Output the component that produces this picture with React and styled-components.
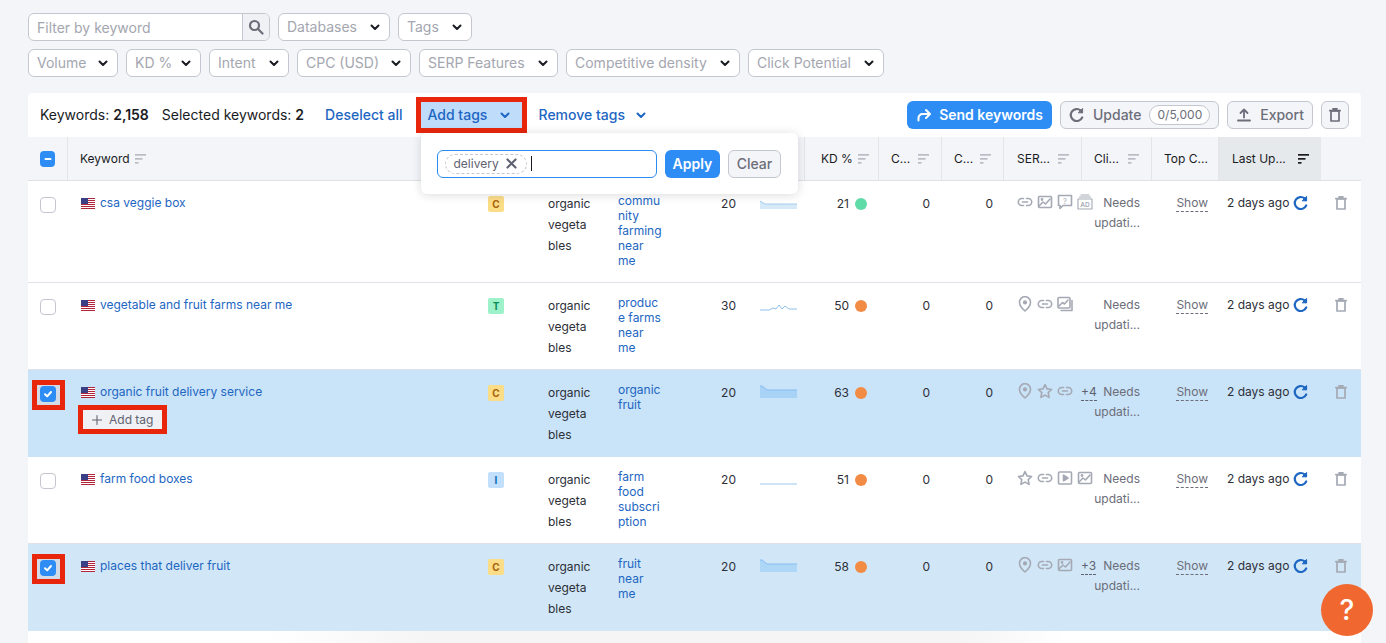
import React from 'react';
import styled, { createGlobalStyle } from 'styled-components';

const GlobalStyle = createGlobalStyle`
  html, body {
    margin: 0;
    padding: 0;
    background: #f4f5f9;
    font-family: Inter, 'Liberation Sans', sans-serif;
    color: #191b23;
  }
  * { box-sizing: border-box; }
`;

const COLUMNS = '40px 410px 60px 70px 72px 65px 60px 74px 63px 62px 78px 70px 67px 102px 40px';

const Page = styled.div`
  height: 643px;
  overflow: hidden;
  padding: 13px 25px 0 28px;
`;

const FilterRow = styled.div`
  display: flex;
  gap: 8px;
  margin-bottom: 8px;
`;

const SearchBox = styled.div`
  display: flex;
  width: 242px;
  height: 28px;
  border: 1px solid #c4c7cf;
  border-radius: 6px;
  background: #fff;
  overflow: hidden;
`;

const SearchInput = styled.div`
  flex: 1;
  padding-left: 8px;
  font-size: 14px;
  line-height: 28px;
  color: #a4a6b0;
`;

const SearchAddon = styled.div`
  width: 27px;
  display: flex;
  align-items: center;
  justify-content: center;
  border-left: 1px solid #c4c7cf;
  background: #f0f1f4;
  color: #6c6e79;
`;

const FilterButton = styled.div`
  width: ${p => p.$width}px;
  height: 28px;
  display: flex;
  align-items: center;
  justify-content: space-between;
  padding: 0 8px;
  background: #fff;
  border: 1px solid #c4c7cf;
  border-radius: 6px;
  font-size: 14px;
  line-height: 26px;
  color: #a4a6b0;
  white-space: nowrap;
`;

const Card = styled.div`
  margin-top: 16px;
  background: #fff;
  border-radius: 4px 4px 0 0;
`;

const Toolbar = styled.div`
  height: 44px;
  display: flex;
  align-items: center;
  padding: 0 12px;
  font-size: 14px;
  line-height: 16px;
  white-space: nowrap;
`;

const Count = styled.span`
  margin-right: 13px;
  b { font-weight: 600; }
`;

const LinkButton = styled.div`
  display: flex;
  align-items: center;
  gap: 10px;
  height: 26px;
  font-weight: 500;
  color: #1d66c2;
  margin-left: ${p => p.$left || 0}px;
`;

const AddTagsWrap = styled.div`
  position: relative;
  margin-left: 13px;
  z-index: 3;
`;

const AddTagsButton = styled.div`
  display: flex;
  align-items: center;
  gap: 12px;
  height: 36px;
  width: 111px;
  padding-left: 7px;
  border: 5px solid #e8260c;
  background: #bfdcfb;
  font-weight: 500;
  color: #1d66c2;
`;

const Popover = styled.div`
  position: absolute;
  left: 5px;
  top: 36px;
  width: 377px;
  height: 61px;
  display: flex;
  align-items: center;
  gap: 8px;
  padding: 0 16px;
  background: #fff;
  border-radius: 6px;
  box-shadow: 0 1px 10px rgba(25, 27, 35, 0.16);
`;

const TagInput = styled.div`
  flex: none;
  width: 220px;
  height: 28px;
  display: flex;
  align-items: center;
  gap: 4px;
  padding-left: 7px;
  border: 1px solid #2b8cef;
  border-radius: 6px;
`;

const TagChip = styled.div`
  display: flex;
  align-items: center;
  gap: 6px;
  height: 20px;
  padding: 0 8px;
  border: 1px dashed #c4c7cf;
  border-radius: 10px;
  font-size: 12px;
  color: #5f6270;
`;

const Caret = styled.div`
  width: 1px;
  height: 15px;
  background: #191b23;
`;

const PrimaryButton = styled.div`
  height: 28px;
  display: flex;
  align-items: center;
  gap: 7px;
  padding: 0 ${p => p.$pad || 8}px;
  border-radius: 6px;
  background: #2e8df5;
  color: #fff;
  font-size: 14px;
  font-weight: 600;
`;

const GhostButton = styled.div`
  height: 28px;
  display: flex;
  align-items: center;
  gap: 8px;
  padding: 0 ${p => p.$pad || 8}px;
  border: 1px solid #c4c7cf;
  border-radius: 6px;
  background: #f4f5f9;
  color: #6c6e79;
  font-size: 14px;
  font-weight: 500;
`;

const ToolbarActions = styled.div`
  margin-left: auto;
  display: flex;
  gap: 8px;
`;

const Quota = styled.span`
  height: 20px;
  padding: 0 7px;
  display: flex;
  align-items: center;
  border: 1px solid #c4c7cf;
  border-radius: 10px;
  background: #fff;
  font-size: 12px;
  font-weight: 400;
`;

const HeaderRow = styled.div`
  display: grid;
  grid-template-columns: ${COLUMNS};
  height: 44px;
  background: #f4f5f9;
  border-bottom: 1px solid #dfe1e6;
`;

const HeaderCell = styled.div`
  display: flex;
  align-items: center;
  justify-content: ${p => (p.$packed ? 'flex-start' : 'space-between')};
  gap: 5px;
  padding: 0 12px 0 ${p => p.$left || 12}px;
  border-right: ${p => (p.$flat ? 'none' : '1px solid #e4e5ea')};
  background: ${p => (p.$active ? '#e6e9ec' : 'transparent')};
  color: #191b23;
  font-size: 12px;
  white-space: nowrap;
`;

const Row = styled.div`
  display: grid;
  grid-template-columns: ${COLUMNS};
  min-height: 87px;
  background: ${p => p.$bg || '#fff'};
  border-bottom: ${p => (p.$bg ? 'none' : '1px solid #e0e1e9')};
`;

const CheckCell = styled.div`
  padding: 15px 0 0 9px;
`;

const CheckWrap = styled.div`
  width: 23px;
  height: 20px;
  padding: 1px 4px 3px 3px;
  background: ${p => (p.$marked ? '#d3dbe6' : 'transparent')};
  outline: ${p => (p.$marked ? '5px solid #e8260c' : 'none')};
`;

const Checkbox = styled.div`
  width: 16px;
  height: 16px;
  display: flex;
  align-items: center;
  justify-content: center;
  border-radius: 4px;
  background: ${p => (p.$on ? '#2e8df5' : '#fff')};
  border: ${p => (p.$on ? 'none' : '1px solid #c4c7cf')};
`;

const KeywordCell = styled.div`
  padding: 13px 0 0 13px;
`;

const KeywordLine = styled.div`
  display: flex;
  align-items: center;
  gap: 5px;
  font-size: 12px;
  line-height: 18px;
  color: #1d66c2;
`;

const AddTagButton = styled.div`
  display: inline-flex;
  align-items: center;
  gap: 6px;
  width: 79px;
  height: 19px;
  margin: 9px 0 0 2px;
  padding-left: 8px;
  background: #f0f1f4;
  outline: 5px solid #e8260c;
  font-size: 12px;
  color: #5f6270;
`;

const IntentCell = styled.div`
  padding: 15px 0 0 10px;
`;

const IntentBadge = styled.div`
  width: 16px;
  height: 16px;
  display: flex;
  align-items: center;
  justify-content: center;
  border-radius: 2px;
  background: ${p => p.$bg};
  color: ${p => p.$fg};
  font-size: 10px;
  font-weight: 700;
`;

const TagCell = styled.div`
  padding: 12px 0 0 10px;
  font-size: 12px;
  line-height: 21px;
  color: #2d2f38;
`;

const TopicCell = styled.div`
  padding: 12px 0 14px 10px;
  font-size: 12px;
  line-height: 15px;
  color: #1d66c2;
`;

const NumberCell = styled.div`
  padding: 12px ${p => p.$right || 11}px 0 0;
  text-align: right;
  font-size: 12px;
  line-height: 21px;
  color: #2d2f38;
`;

const TrendCell = styled.div`
  padding: 15px 0 0 15px;
`;

const KdCell = styled.div`
  display: flex;
  justify-content: flex-end;
  align-items: flex-start;
  gap: 6px;
  padding: 12px 12px 0 0;
  font-size: 12px;
  line-height: 21px;
  color: #2d2f38;
`;

const KdDot = styled.span`
  width: 12px;
  height: 12px;
  margin-top: 5px;
  border-radius: 50%;
  background: ${p => p.$color};
`;

const SerpCell = styled.div`
  display: flex;
  align-items: flex-start;
  gap: 4px;
  padding: 13px 0 0 13px;
  color: #a4a9b4;
  white-space: nowrap;
`;

const MoreLink = styled.span`
  margin-left: 4px;
  font-size: 12px;
  line-height: 17px;
  color: #5f6270;
  border-bottom: 1px dashed #5f6270;
`;

const NeedsCell = styled.div`
  padding: 12px 12px 0 0;
  text-align: right;
  font-size: 12px;
  line-height: 20px;
  color: #6c6e79;
`;

const ShowCell = styled.div`
  padding: 12px 11px 0 0;
  text-align: right;
  font-size: 12px;
  line-height: 20px;
  color: #6c6e79;
`;

const ShowLink = styled.span`
  display: inline-block;
  line-height: 16px;
  border-bottom: 1px dashed #6c6e79;
`;

const DateCell = styled.div`
  display: flex;
  align-items: flex-start;
  gap: 4px;
  padding: 12px 0 0 8px;
  font-size: 12px;
  line-height: 20px;
  color: #2d2f38;
  white-space: nowrap;
`;

const DateIcon = styled.span`
  margin-top: 2px;
  color: #1d66c2;
`;

const TrashCell = styled.div`
  padding: 14px 0 0 12px;
  color: #a4a9b4;
`;

const Fade = styled.div`
  height: 12px;
  background: linear-gradient(90deg, #fff 18%, #f5f5f6 30%, #f5f5f6 70%, #fff 78%);
`;

const HelpButton = styled.div`
  position: fixed;
  left: 1321px;
  top: 584px;
  width: 52px;
  height: 52px;
  display: flex;
  align-items: center;
  justify-content: center;
  border-radius: 50%;
  background: #f0682f;
  color: #fff;
  font-size: 28px;
  font-weight: 500;
`;

const Icon = ({ size = 16, sw = 1.6, children }) => (
  <svg width={size} height={size} viewBox="0 0 16 16" fill="none" stroke="currentColor" strokeWidth={sw} strokeLinecap="round" strokeLinejoin="round" style={{ display: 'block', flex: 'none' }}>
    {children}
  </svg>
);

const Chevron = ({ color = '#191b23' }) => (
  <svg width="12" height="12" viewBox="0 0 12 12" fill="none" stroke={color} strokeWidth="2" strokeLinecap="round" strokeLinejoin="round" style={{ flex: 'none' }}>
    <path d="M2.5 4.5 6 8l3.5-3.5" />
  </svg>
);

const SortIcon = ({ color = '#b9bcc5' }) => (
  <svg width="11" height="10" viewBox="0 0 11 10" fill={color} style={{ flex: 'none' }}>
    <rect x="0" y="0" width="11" height="1.7" />
    <rect x="0" y="4" width="7.5" height="1.7" />
    <rect x="0" y="8" width="3.5" height="1.7" />
  </svg>
);

const Flag = () => (
  <svg width="14" height="11" viewBox="0 0 14 11" style={{ flex: 'none' }}>
    <rect width="14" height="11" fill="#fff" />
    {[0, 2, 4, 6, 8, 10].map(y => <rect key={y} y={y} width="14" height="1" fill="#b3263a" />)}
    <rect width="7" height="6" fill="#3a3f86" />
  </svg>
);

const CheckMark = () => (
  <svg width="10" height="10" viewBox="0 0 10 10" fill="none" stroke="#fff" strokeWidth="2" strokeLinecap="round" strokeLinejoin="round">
    <path d="M2 5.2 4.2 7.3 8 3" />
  </svg>
);

const Reload = ({ size = 16 }) => (
  <Icon size={size} sw={2.2}>
    <path d="M13.2 10.5A6 6 0 1 1 11.6 3.4L13 5" />
    <path d="M13.6 1.8v4h-4z" fill="currentColor" strokeWidth="1" />
  </Icon>
);

const Trash = () => (
  <Icon sw={1.7}>
    <path d="M4 4h8v10H4z" />
    <path d="M2.8 3.6h10.4M6 1.8h4" />
  </Icon>
);

const LinkIcon = () => (
  <Icon>
    <path d="M6.5 4.5H4.8a3.5 3.5 0 0 0 0 7h1.7M9.5 4.5h1.7a3.5 3.5 0 0 1 0 7H9.5M5.5 8h5" />
  </Icon>
);

const ImageIcon = () => (
  <Icon>
    <rect x="1.5" y="2.5" width="13" height="11" rx="1" />
    <path d="M2 12l4-4 2.5 2L13 5" />
    <circle cx="5" cy="5.5" r=".6" />
  </Icon>
);

const ImagesIcon = () => (
  <Icon>
    <rect x="1" y="1.5" width="12" height="10.5" rx="1" />
    <path d="M2 10l3.5-3.5 2 1.5L11 4M15 4.5V14.5H4" />
  </Icon>
);

const BubbleIcon = () => (
  <Icon>
    <path d="M1.5 1.5h13v10H6L3 14.5v-3H1.5z" />
    <text x="8" y="9.5" fontSize="7.5" textAnchor="middle" fill="currentColor" stroke="none" fontFamily="Inter">?</text>
  </Icon>
);

const AdIcon = () => (
  <Icon sw={1.1}>
    <path d="M4 1h8M2.5 3h11" />
    <rect x="1" y="5" width="14" height="10" />
    <text x="8" y="12.8" fontSize="6.5" fontWeight="600" textAnchor="middle" fill="currentColor" stroke="none" fontFamily="Inter">AD</text>
  </Icon>
);

const PinIcon = () => (
  <Icon>
    <path d="M8 15s5.5-4.7 5.5-8.8a5.5 5.5 0 0 0-11 0C2.5 10.3 8 15 8 15z" />
    <circle cx="8" cy="6.4" r="1.3" fill="currentColor" />
  </Icon>
);

const StarIcon = () => (
  <Icon>
    <path d="M8 1.6l2 4.3 4.6.6-3.4 3.2.9 4.7L8 12.1l-4.1 2.3.9-4.7L1.4 6.5 6 5.9z" />
  </Icon>
);

const PlayIcon = () => (
  <Icon>
    <rect x="1.5" y="2" width="13" height="12" rx="1" />
    <path d="M6.5 5.2v5.6L11 8z" fill="currentColor" />
  </Icon>
);

const SERP = {
  link: LinkIcon,
  image: ImageIcon,
  images: ImagesIcon,
  bubble: BubbleIcon,
  ad: AdIcon,
  pin: PinIcon,
  star: StarIcon,
  play: PlayIcon,
};

const Trend = ({ line, fill, stroke }) => (
  <svg width="37" height="14" viewBox="0 0 37 14" fill="none" style={{ display: 'block' }}>
    {fill && <path d={`${line} V13 H0 Z`} fill={fill} />}
    <path d={line} stroke={stroke} strokeWidth="1" />
  </svg>
);

const FILTERS_TOP = [
  { label: 'Databases', width: 112 },
  { label: 'Tags', width: 74 },
];

const FILTERS = [
  { label: 'Volume', width: 90 },
  { label: 'KD %', width: 75 },
  { label: 'Intent', width: 80 },
  { label: 'CPC (USD)', width: 114 },
  { label: 'SERP Features', width: 139 },
  { label: 'Competitive density', width: 174 },
  { label: 'Click Potential', width: 136 },
];

const HEADERS = [
  { key: 'c1', label: 'C...' },
  { key: 'c2', label: 'C...', left: 12 },
  { key: 'serp', label: 'SER...', left: 13 },
  { key: 'click', label: 'Cli...' },
];

const ROWS = [
  {
    keyword: 'csa veggie box',
    intent: { text: 'C', bg: '#fbdd88', fg: '#a8620a' },
    topic: ['commu', 'nity', 'farming', 'near', 'me'],
    volume: 20,
    trend: { line: 'M0 5 L5 8 H37', fill: '#d6e9f9', stroke: '#a5cdf0' },
    kd: 21,
    dot: '#5fdba7',
    serp: ['link', 'image', 'bubble', 'ad'],
  },
  {
    keyword: 'vegetable and fruit farms near me',
    intent: { text: 'T', bg: '#9ef2c9', fg: '#0a8a58' },
    topic: ['produc', 'e farms', 'near', 'me'],
    volume: 30,
    trend: { line: 'M0 12 H9 L13 10 L16 11 L19 7 L22 11 L25 8 L29 11 H37', stroke: '#8fc0ec' },
    kd: 50,
    dot: '#f28c45',
    serp: ['pin', 'link', 'images'],
  },
  {
    keyword: 'organic fruit delivery service',
    intent: { text: 'C', bg: '#fbdd88', fg: '#a8620a' },
    topic: ['organic', 'fruit'],
    volume: 20,
    trend: { line: 'M0 1 H2 L7 5 H37', fill: '#a9d3f6', stroke: '#84bdf0' },
    kd: 63,
    dot: '#f28c45',
    serp: ['pin', 'star', 'link'],
    more: '+4',
    bg: '#c9e3f8',
    selected: true,
    addTag: true,
  },
  {
    keyword: 'farm food boxes',
    intent: { text: 'I', bg: '#c2e0fb', fg: '#0b6cb5' },
    topic: ['farm', 'food', 'subscri', 'ption'],
    volume: 20,
    trend: { line: 'M0 12 H37', stroke: '#9cc8ef' },
    kd: 51,
    dot: '#f28c45',
    serp: ['star', 'link', 'play', 'image'],
  },
  {
    keyword: 'places that deliver fruit',
    intent: { text: 'C', bg: '#fbdd88', fg: '#a8620a' },
    topic: ['fruit', 'near', 'me'],
    volume: 20,
    trend: { line: 'M0 1 H2 L7 5 H37', fill: '#aed6f7', stroke: '#84bdf0' },
    kd: 58,
    dot: '#f28c45',
    serp: ['pin', 'link', 'image'],
    more: '+3',
    bg: '#d1e7f7',
    selected: true,
  },
];

const KeywordRow = ({ row }) => (
  <Row $bg={row.bg}>
    <CheckCell>
      <CheckWrap $marked={row.selected}>
        <Checkbox $on={row.selected}>{row.selected && <CheckMark />}</Checkbox>
      </CheckWrap>
    </CheckCell>
    <KeywordCell>
      <KeywordLine><Flag />{row.keyword}</KeywordLine>
      {row.addTag && (
        <AddTagButton>
          <Icon size={12} sw={1.4}><path d="M8 2v12M2 8h12" /></Icon>
          Add tag
        </AddTagButton>
      )}
    </KeywordCell>
    <IntentCell>
      <IntentBadge $bg={row.intent.bg} $fg={row.intent.fg}>{row.intent.text}</IntentBadge>
    </IntentCell>
    <TagCell>organic<br />vegeta<br />bles</TagCell>
    <TopicCell>
      {row.topic.map(part => <div key={part}>{part}</div>)}
    </TopicCell>
    <NumberCell $right={9}>{row.volume}</NumberCell>
    <TrendCell><Trend {...row.trend} /></TrendCell>
    <KdCell>{row.kd}<KdDot $color={row.dot} /></KdCell>
    <NumberCell $right={12}>0</NumberCell>
    <NumberCell>0</NumberCell>
    <SerpCell>
      {row.serp.map(name => {
        const Glyph = SERP[name];
        return <Glyph key={name} />;
      })}
      {row.more && <MoreLink>{row.more}</MoreLink>}
    </SerpCell>
    <NeedsCell>Needs<br />updati...</NeedsCell>
    <ShowCell><ShowLink>Show</ShowLink></ShowCell>
    <DateCell>2 days ago<DateIcon><Reload /></DateIcon></DateCell>
    <TrashCell><Trash /></TrashCell>
  </Row>
);

export default function App() {
  return (
    <>
      <GlobalStyle />
      <Page>
        <FilterRow>
          <SearchBox>
            <SearchInput>Filter by keyword</SearchInput>
            <SearchAddon>
              <Icon sw={2.2}><circle cx="6.5" cy="6.5" r="4.5" /><path d="M10 10l4.5 4.5" /></Icon>
            </SearchAddon>
          </SearchBox>
          {FILTERS_TOP.map(f => <FilterButton key={f.label} $width={f.width}>{f.label}<Chevron /></FilterButton>)}
        </FilterRow>
        <FilterRow>
          {FILTERS.map(f => <FilterButton key={f.label} $width={f.width}>{f.label}<Chevron /></FilterButton>)}
        </FilterRow>
        <Card>
          <Toolbar>
            <Count>Keywords: <b>2,158</b></Count>
            <Count>Selected keywords: <b>2</b></Count>
            <LinkButton $left={8}>Deselect all</LinkButton>
            <AddTagsWrap>
              <AddTagsButton>Add tags<Chevron color="#1d66c2" /></AddTagsButton>
              <Popover>
                <TagInput>
                  <TagChip>
                    delivery
                    <Icon size={13} sw={2.6}><path d="M3 3l10 10M13 3L3 13" /></Icon>
                  </TagChip>
                  <Caret />
                </TagInput>
                <PrimaryButton>Apply</PrimaryButton>
                <GhostButton $pad={7.5}>Clear</GhostButton>
              </Popover>
            </AddTagsWrap>
            <LinkButton $left={12}>Remove tags<Chevron color="#1d66c2" /></LinkButton>
            <ToolbarActions>
              <PrimaryButton $pad={9}>
                <Icon sw={2}><path d="M2.5 13.5V11a4 4 0 0 1 4-4h7M10 3l4 4-4 4" /></Icon>
                Send keywords
              </PrimaryButton>
              <GhostButton>
                <Reload />
                Update
                <Quota>0/5,000</Quota>
              </GhostButton>
              <GhostButton>
                <Icon sw={1.8}><path d="M8 10.5V2.5M4.5 6 8 2.5 11.5 6M2 13.5h12" /></Icon>
                Export
              </GhostButton>
              <GhostButton $pad={5}><Trash /></GhostButton>
            </ToolbarActions>
          </Toolbar>
          <HeaderRow>
            <HeaderCell>
              <Checkbox $on>
                <svg width="10" height="10" viewBox="0 0 10 10" stroke="#fff" strokeWidth="2" strokeLinecap="round"><path d="M2.5 5h5" /></svg>
              </Checkbox>
            </HeaderCell>
            <HeaderCell $packed $flat>Keyword<SortIcon /></HeaderCell>
            <HeaderCell $flat />
            <HeaderCell $flat />
            <HeaderCell $flat />
            <HeaderCell $flat />
            <HeaderCell />
            <HeaderCell $left={16}>KD %<SortIcon /></HeaderCell>
            {HEADERS.map(h => <HeaderCell key={h.key} $left={h.left}>{h.label}<SortIcon /></HeaderCell>)}
            <HeaderCell>Top C...</HeaderCell>
            <HeaderCell $active $flat $left={13}>Last Up...<SortIcon color="#191b23" /></HeaderCell>
            <HeaderCell $flat />
          </HeaderRow>
          {ROWS.map(row => <KeywordRow key={row.keyword} row={row} />)}
          <Fade />
        </Card>
        <HelpButton>?</HelpButton>
      </Page>
    </>
  );
}
